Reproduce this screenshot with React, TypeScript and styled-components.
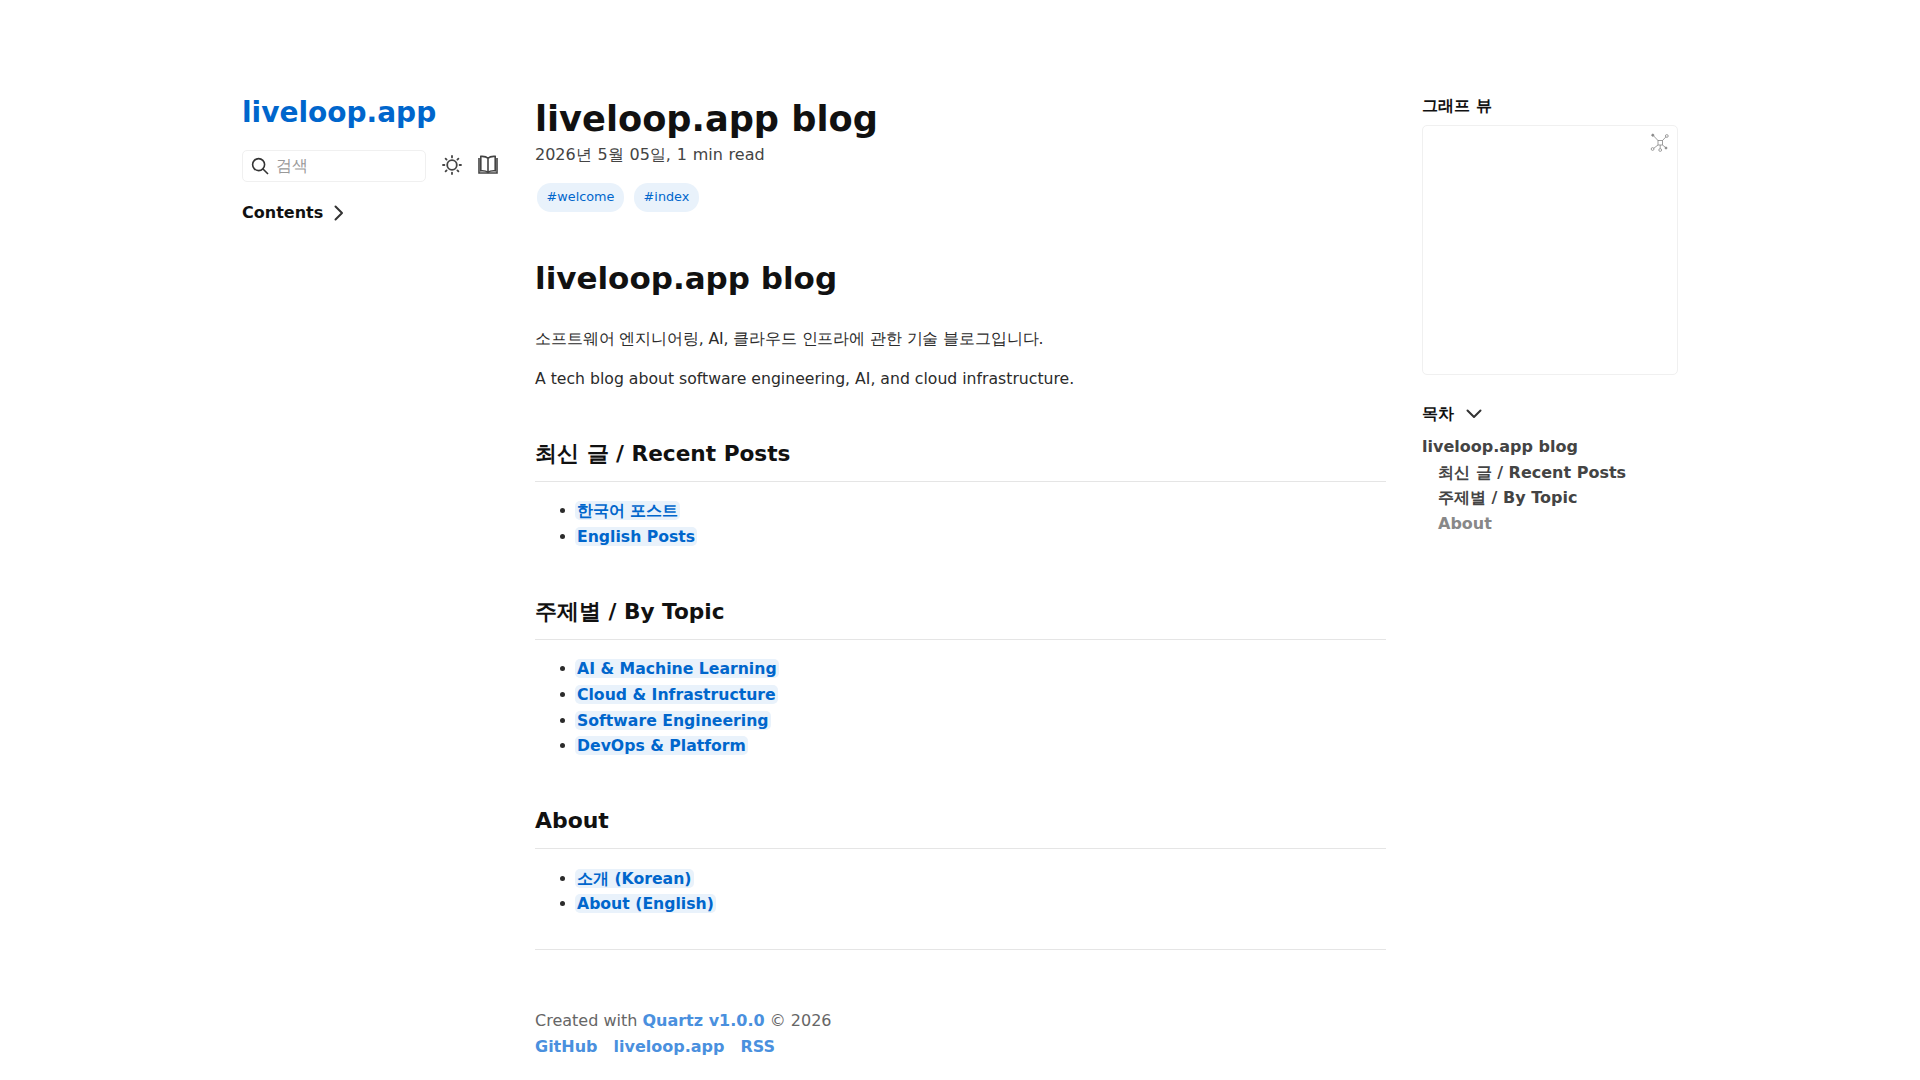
import React from "react";
import styled, { createGlobalStyle } from "styled-components";

const GlobalStyle = createGlobalStyle`
  html, body { margin: 0; padding: 0; background: #fff; }
  body {
    font-family: "DejaVu Sans", sans-serif;
    font-size: 16px;
    line-height: 25.6px;
    color: #2b2b2b;
  }
`;

const Page = styled.div`
  display: grid;
  grid-template-columns: 293px 851px 292px;
  justify-content: start;
  padding: 94px 0 0 242px;
`;
const Left = styled.aside`
  display: flex;
  flex-direction: column;
  padding-top: 3px;
`;
const SiteTitle = styled.h2`
  margin: 0;
  font-size: 28px;
  line-height: 32px;
  font-weight: 700;
  color: #0066cc;
`;
const SearchRow = styled.div`
  display: flex;
  align-items: center;
  margin-top: 21px;
`;
const SearchBox = styled.div`
  width: 184px;
  height: 32px;
  box-sizing: border-box;
  border: 1px solid #f0f0f0;
  border-radius: 5px;
  display: flex;
  align-items: center;
  padding-left: 8px;
  gap: 7px;
  color: #999;
  font-size: 16px;
`;
const IconSlot = styled.span`
  display: flex;
  margin: 0 0 3px ${p => p.$ml}px;
  color: #444;
`;
const Contents = styled.div`
  display: flex;
  align-items: center;
  gap: 8px;
  margin-top: 18px;
  font-size: 16px;
  font-weight: 700;
  color: #111;
`;
const Main = styled.main`
  display: flex;
  flex-direction: column;
  padding-top: 2px;
  font-size: 15.68px;
`;
const ArticleTitle = styled.h1`
  margin: 0;
  font-size: 35.2px;
  line-height: 46px;
  font-weight: 700;
  color: #111;
`;
const Meta = styled.p`
  margin: 1px 0 0;
  font-size: 16px;
  line-height: 24px;
  word-spacing: 0.7px;
  color: #444;
`;
const Tags = styled.div`
  display: flex;
  gap: 9.6px;
  margin: 16px 0 0 2px;
`;
const Tag = styled.span`
  background: #e9f2fb;
  color: #0066cc;
  border-radius: 14px;
  font-size: 12.8px;
  line-height: 28.8px;
  padding: 0 10px 0 9.6px;
`;
const Heading = styled.h1`
  margin: 44px 0 26px;
  font-size: 31px;
  line-height: 44px;
  font-weight: 700;
  color: #111;
`;
const Para = styled.p`
  margin: 0;
  font-size: 15.68px;
  letter-spacing: ${p => p.$tracking || 0}px;
  line-height: 25px;
  & + & {
    margin-top: 15px;
  }
`;
const Section = styled.h2`
  margin: 45.5px 0 0;
  padding-bottom: 11px;
  border-bottom: 1px solid #e5e5e5;
  font-size: ${p => p.$size || 21.95}px;
  line-height: 33px;
  font-weight: 700;
  color: #111;
  ${Para} + & {
    margin-top: 46px;
  }
`;
const List = styled.ul`
  margin: 16.5px 0 0;
  padding-left: 42px;
`;
const Item = styled.li`
  line-height: 25.6px;
`;
const PostLink = styled.a`
  color: #0066cc;
  font-weight: 700;
  background: #e9f2fb;
  border-radius: 5px;
  padding: 0 2px;
  margin: 0 -2px;
`;
const Divider = styled.hr`
  border: 0;
  border-top: 1px solid #e5e5e5;
  margin: 31.5px 0 0;
`;
const Footer = styled.footer`
  margin-top: 58px;
  color: #666;
  font-size: 16px;
  line-height: 26px;
`;
const FootLinks = styled.div`
  display: flex;
  gap: 16px;
`;
const FootLink = styled.a`
  color: #4a90de;
  font-weight: 700;
`;
const Right = styled.aside`
  display: flex;
  flex-direction: column;
  padding-left: 36px;
`;
const WidgetTitle = styled.h3`
  margin: 0;
  font-size: 16px;
  line-height: 24px;
  font-weight: 700;
  color: #111;
`;
const Graph = styled.div`
  position: relative;
  margin-top: 7px;
  height: 250px;
  box-sizing: border-box;
  border: 1px solid #f0f0f0;
  border-radius: 5px;
`;
const GraphIcon = styled.span`
  position: absolute;
  top: 7px;
  right: 7px;
  display: flex;
  color: #888;
`;
const TocHead = styled.div`
  display: flex;
  align-items: center;
  gap: 12px;
  margin-top: 27px;
`;
const Toc = styled.ul`
  list-style: none;
  margin: 8px 0 0;
  padding: 0;
  font-weight: 700;
`;
const TocItem = styled.li`
  line-height: 25.5px;
  padding-left: ${p => (p.$nested ? 16 : 0)}px;
  color: ${p => (p.$faded ? "#888" : "#444")};
`;

const posts = ["한국어 포스트", "English Posts"];
const topics = ["AI & Machine Learning", "Cloud & Infrastructure", "Software Engineering", "DevOps & Platform"];
const about = ["소개 (Korean)", "About (English)"];

const Links = ({ items }: { items: string[] }) => (
  <List>
    {items.map(t => (
      <Item key={t}>
        <PostLink>{t}</PostLink>
      </Item>
    ))}
  </List>
);

const SearchIcon = () => (
  <svg width="18" height="18" viewBox="0 0 18 18" fill="none" stroke="#333" strokeWidth="1.6">
    <circle cx="7.6" cy="7.6" r="6" />
    <path d="M12 12l5 5" />
  </svg>
);
const SunIcon = () => (
  <svg width="20" height="20" viewBox="0 0 20 20" fill="none" stroke="currentColor" strokeWidth="1.8" strokeLinecap="round">
    <circle cx="10" cy="10" r="4.8" />
    <path d="M10 1v1.4M10 17.6V19M1 10h1.4M17.6 10H19M3.6 3.6l1 1M15.4 15.4l1 1M3.6 16.4l1-1M15.4 4.6l1-1" />
  </svg>
);
const BookIcon = () => (
  <svg width="20" height="20" viewBox="0 0 20 20" fill="none" stroke="currentColor" strokeWidth="1.6">
    <path d="M10 3.2C8.4 1.6 5.5 1.2 2.8 1.4v14.4c2.7-.2 5.6.2 7.2 1.6 1.6-1.4 4.5-1.8 7.2-1.6V1.4C14.5 1.2 11.6 1.6 10 3.2zM10 3.2v14.2" />
    <path d="M1 3v15h18V3" />
  </svg>
);
const Chevron = ({ down }: { down?: boolean }) => (
  <svg width="16" height="16" viewBox="0 0 16 16" fill="none" stroke="#333" strokeWidth="2" strokeLinecap="round" strokeLinejoin="round">
    <path d={down ? "M1.5 4.5L8 11l6.5-6.5" : "M4.5 1.5L11 8l-6.5 6.5"} />
  </svg>
);
const GraphGlyph = () => (
  <svg width="20" height="20" viewBox="0 0 20 20" fill="none" stroke="currentColor" strokeWidth="0.8">
    <rect x="8" y="7.5" width="4.5" height="4.5" />
    <path d="M8 7.5L3.5 2.8M12.5 7.5l3.6-3.8M8 12l-4.4 3.4M10.2 12v3.6M12.5 12l3 2.4" />
    <circle cx="2.8" cy="2.2" r="1.1" fill="currentColor" />
    <circle cx="16.8" cy="3" r="1.4" />
    <circle cx="2.6" cy="16" r="1.4" />
    <circle cx="10.2" cy="17" r="1.4" />
    <circle cx="16" cy="15" r="1" fill="currentColor" />
  </svg>
);

export default function App() {
  return (
    <>
      <GlobalStyle />
      <Page>
        <Left>
          <SiteTitle>liveloop.app</SiteTitle>
          <SearchRow>
            <SearchBox>
              <SearchIcon />
              검색
            </SearchBox>
            <IconSlot $ml={16}><SunIcon /></IconSlot>
            <IconSlot $ml={16}><BookIcon /></IconSlot>
          </SearchRow>
          <Contents>
            Contents
            <Chevron />
          </Contents>
        </Left>
        <Main>
          <ArticleTitle>liveloop.app blog</ArticleTitle>
          <Meta>2026년 5월 05일, 1 min read</Meta>
          <Tags>
            <Tag>#welcome</Tag>
            <Tag>#index</Tag>
          </Tags>
          <Heading>liveloop.app blog</Heading>
          <Para $tracking={-0.12}>소프트웨어 엔지니어링, AI, 클라우드 인프라에 관한 기술 블로그입니다.</Para>
          <Para>A tech blog about software engineering, AI, and cloud infrastructure.</Para>
          <Section $size={21.65}>최신 글 / Recent Posts</Section>
          <Links items={posts} />
          <Section $size={21.65}>주제별 / By Topic</Section>
          <Links items={topics} />
          <Section>About</Section>
          <Links items={about} />
          <Divider />
          <Footer>
            <div>
              Created with <FootLink>Quartz v1.0.0</FootLink> © 2026
            </div>
            <FootLinks>
              <FootLink>GitHub</FootLink>
              <FootLink>liveloop.app</FootLink>
              <FootLink>RSS</FootLink>
            </FootLinks>
          </Footer>
        </Main>
        <Right>
          <WidgetTitle>그래프 뷰</WidgetTitle>
          <Graph>
            <GraphIcon><GraphGlyph /></GraphIcon>
          </Graph>
          <TocHead>
            <WidgetTitle>목차</WidgetTitle>
            <Chevron down />
          </TocHead>
          <Toc>
            <TocItem>liveloop.app blog</TocItem>
            <TocItem $nested>최신 글 / Recent Posts</TocItem>
            <TocItem $nested>주제별 / By Topic</TocItem>
            <TocItem $nested $faded>About</TocItem>
          </Toc>
        </Right>
      </Page>
    </>
  );
}
